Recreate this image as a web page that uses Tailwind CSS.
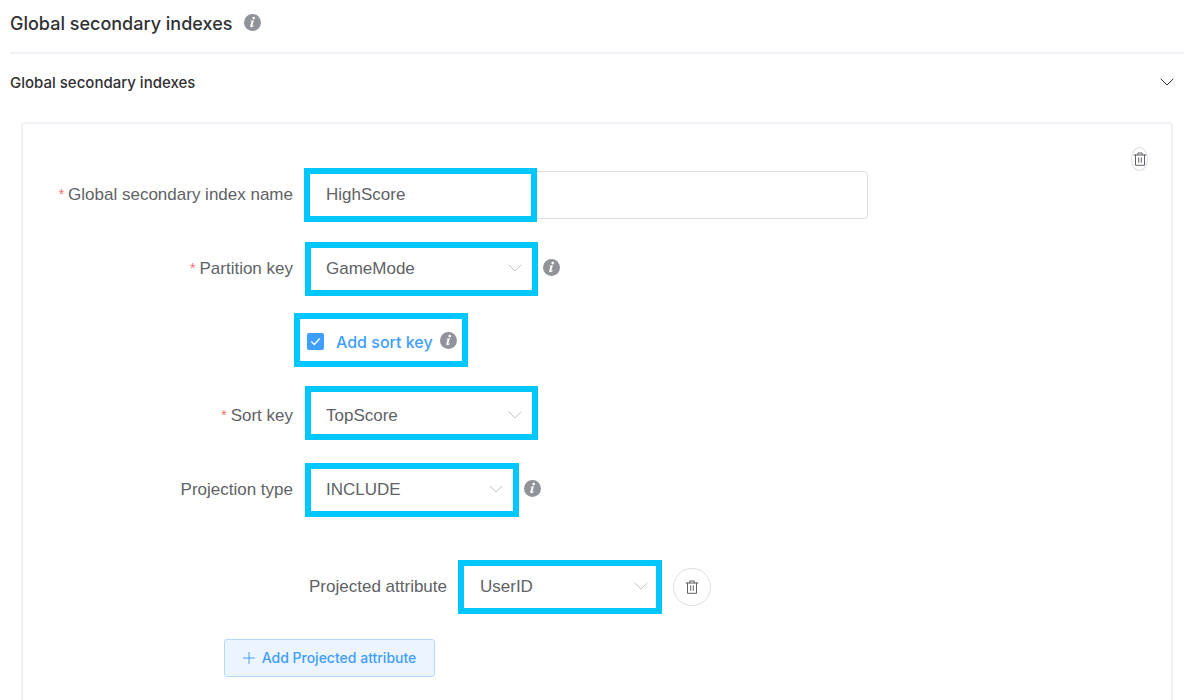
<!DOCTYPE html>
<html lang="en">
<head>
<meta charset="utf-8">
<meta name="viewport" content="width=device-width, initial-scale=1">
<title>Global secondary indexes</title>
<script src="https://cdn.jsdelivr.net/npm/@tailwindcss/browser@4"></script>
</head>
<body class="bg-white font-['Liberation_Sans',Arial,sans-serif] text-[17px] leading-6 text-[#606266]">
<svg class="hidden" aria-hidden="true">
  <symbol id="info" viewBox="0 0 17 17">
    <circle cx="8.5" cy="8.5" r="8.5" fill="#909399"/>
    <circle cx="9.7" cy="4.1" r="1.3" fill="#fff"/>
    <path d="M6.4 6.7 9.9 6.3 8.4 11.6c-.1.5.2.6.5.3l.8-.9.4.3c-.8 1.3-1.7 2-2.7 2-1 0-1.4-.7-1.1-1.7L7.5 7.8c.1-.4 0-.6-.4-.6h-.8z" fill="#fff"/>
  </symbol>
  <symbol id="down" viewBox="0 0 14 8">
    <path d="M1 1l6 6 6-6" fill="none" stroke="currentColor" stroke-linecap="round" stroke-linejoin="round"/>
  </symbol>
  <symbol id="trash" viewBox="0 0 14 14">
    <path d="M1 3h12M2.5 3v10.3h9V3M4.8 3V1h4.4v2M5.7 5.8v4.6M8.3 5.8v4.6" fill="none" stroke="currentColor" stroke-linecap="round" stroke-linejoin="round"/>
  </symbol>
</svg>
<main class="flex h-screen flex-col overflow-hidden pr-4 pl-[10px]">
  <header class="flex h-[54px] items-center gap-3 border-b-2 border-[#f0f0f7] pb-2">
    <h1 class="pt-[3px] font-['Inter',sans-serif] text-[18px] font-medium text-[#303133]">Global secondary indexes</h1>
    <svg class="size-[17px]" role="img" aria-label="Information"><use href="#info"/></svg>
  </header>
  <h2>
    <button type="button" class="flex h-[68px] w-full items-center justify-between pr-[10px] pb-3 font-['Inter',sans-serif] text-[15px] font-medium text-[#303133]">
      <span class="pt-0.5">Global secondary indexes</span>
      <svg class="h-2 w-[14px]" aria-hidden="true"><use href="#down"/></svg>
    </button>
  </h2>
  <form class="relative mr-[11px] ml-[11px] flex-1 rounded-t border-2 border-b-0 border-[#f0f0f7] pt-11 pl-px">
    <button type="button" aria-label="Delete index" class="absolute top-[23px] right-[23px] flex h-6 w-[17px] items-center justify-center rounded-[50%] border border-[#dcdfe6]">
      <svg class="size-[14px] shrink-0" aria-hidden="true"><use href="#trash"/></svg>
    </button>

    <div class="flex h-[54px] items-center">
      <label for="name" class="mr-[11px] w-[269px] text-right"><span class="mr-1 align-[1px] text-sm leading-none text-[#f56c6c]">*</span>Global secondary index name</label>
      <div class="relative w-[564px]">
        <input id="name" value="HighScore" class="h-12 w-full rounded border border-[#dcdfe6] px-[21px] outline-none">
        <span class="pointer-events-none absolute top-[-3px] left-0 h-[54px] w-[233px] border-6 border-[#00c8ff]"></span>
      </div>
    </div>

    <div class="mt-5 flex h-[54px] items-center">
      <label for="partition" class="mr-3 w-[269px] text-right"><span class="mr-1 align-[1px] text-sm leading-none text-[#f56c6c]">*</span>Partition key</label>
      <div class="grid h-full w-[233px] items-center border-6 border-[#00c8ff]">
        <select id="partition" class="col-start-1 row-start-1 h-full w-full appearance-none pl-[15px] outline-none"><option>GameMode</option></select>
        <svg class="pointer-events-none col-start-1 row-start-1 mr-[10px] mb-0.5 h-2 w-[14px] justify-self-end text-[#c0c4cc]" aria-hidden="true"><use href="#down"/></svg>
      </div>
      <svg class="mb-1 ml-[5px] size-[17px]" role="img" aria-label="Information"><use href="#info"/></svg>
    </div>

    <div class="mt-[17px] ml-[270px] flex h-[54px] w-[174px] items-center border-6 border-[#00c8ff] pt-[3px] pl-[7px]">
      <label class="flex items-center gap-3 font-['Inter',sans-serif] text-base font-medium text-[#409eff]">
        <span class="grid size-[17px] place-items-center">
          <input type="checkbox" checked class="col-start-1 row-start-1 size-[17px] appearance-none rounded-xs bg-[#409eff]">
          <svg class="pointer-events-none col-start-1 row-start-1 size-[11px]" viewBox="0 0 11 11" aria-hidden="true"><path d="M1.3 5.5l3 3 5.4-6" fill="none" stroke="#fff" stroke-width="1.3"/></svg>
        </span>
        Add sort key
      </label>
      <svg class="mb-[3px] ml-[7px] size-[17px] shrink-0" role="img" aria-label="Information"><use href="#info"/></svg>
    </div>

    <div class="mt-[19px] flex h-[54px] items-center">
      <label for="sort" class="mr-3 w-[269px] pt-[5px] text-right"><span class="mr-1 align-[1px] text-sm leading-none text-[#f56c6c]">*</span>Sort key</label>
      <div class="grid h-full w-[233px] items-center border-6 border-[#00c8ff]">
        <select id="sort" class="col-start-1 row-start-1 h-full w-full appearance-none pt-[5px] pl-[15px] outline-none"><option>TopScore</option></select>
        <svg class="pointer-events-none col-start-1 row-start-1 mt-[3px] mr-[10px] h-2 w-[14px] justify-self-end text-[#c0c4cc]" aria-hidden="true"><use href="#down"/></svg>
      </div>
    </div>

    <div class="mt-[23px] flex h-[54px] items-center">
      <label for="projection" class="mr-3 w-[269px] text-right">Projection type</label>
      <div class="grid h-full w-[214px] items-center border-6 border-[#00c8ff]">
        <select id="projection" class="col-start-1 row-start-1 h-full w-full appearance-none pl-[15px] outline-none"><option>INCLUDE</option></select>
        <svg class="pointer-events-none col-start-1 row-start-1 mr-[10px] mb-0.5 h-2 w-[14px] justify-self-end text-[#c0c4cc]" aria-hidden="true"><use href="#down"/></svg>
      </div>
      <svg class="mb-1 ml-[5px] size-[17px]" role="img" aria-label="Information"><use href="#info"/></svg>
    </div>

    <div class="mt-[43px] flex h-[54px] items-center">
      <label for="attribute" class="mr-[11px] w-[423px] text-right">Projected attribute</label>
      <div class="grid h-full w-[204px] items-center border-6 border-[#00c8ff]">
        <select id="attribute" class="col-start-1 row-start-1 h-full w-full appearance-none pl-4 outline-none"><option>UserID</option></select>
        <svg class="pointer-events-none col-start-1 row-start-1 mr-2 mb-0.5 h-2 w-[14px] justify-self-end text-[#c0c4cc]" aria-hidden="true"><use href="#down"/></svg>
      </div>
      <button type="button" aria-label="Delete attribute" class="ml-[11px] flex size-[38px] items-center justify-center rounded-full border border-[#dcdfe6]">
        <svg class="size-[14px]" aria-hidden="true"><use href="#trash"/></svg>
      </button>
    </div>

    <button type="button" class="mt-[25px] ml-[200px] flex h-[38px] w-[211px] items-center justify-center gap-[7px] rounded-[3px] border border-[#b3d8ff] bg-[#ecf5ff] font-['Inter',sans-serif] text-sm font-medium text-[#409eff]">
      <svg class="size-3" viewBox="0 0 12 12" aria-hidden="true"><path d="M6 .5v11M.5 6h11" stroke="currentColor" stroke-linecap="round"/></svg>
      Add Projected attribute
    </button>
  </form>
</main>
</body>
</html>
